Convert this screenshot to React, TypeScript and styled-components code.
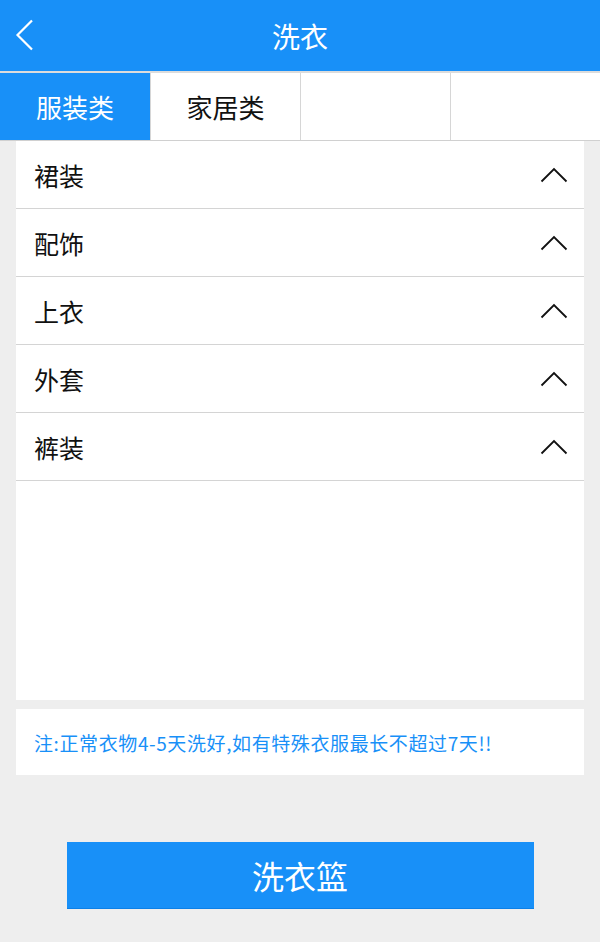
import React from "react";
import styled, { createGlobalStyle } from "styled-components";

const BLUE = "#1890f8";

const GlobalStyle = createGlobalStyle`
  html, body {
    margin: 0;
    padding: 0;
    background: #eeeeee;
    font-family: "Noto Sans CJK SC", "Noto Sans", sans-serif;
  }
`;

const Page = styled.div`
  width: 600px;
  height: 942px;
  display: flex;
  flex-direction: column;
  background: #eeeeee;
`;

const Header = styled.div`
  height: 71px;
  background: ${BLUE};
  display: flex;
  align-items: center;
  justify-content: center;
  position: relative;
  border-bottom: 2px solid #dcdcdc;
`;

const Title = styled.h1`
  margin: 0;
  color: #fff;
  font-size: 28px;
  font-weight: 400;
  line-height: 1;
`;

const Back = styled.div`
  position: absolute;
  left: 15px;
  top: 19px;
  width: 20px;
  height: 32px;
`;

const Tabs = styled.div`
  display: grid;
  grid-template-columns: repeat(4, 1fr);
  height: 67px;
  border-bottom: 1px solid #d0d0d0;
  background: #fff;
`;

const Tab = styled.div<{ $active?: boolean }>`
  display: flex;
  align-items: center;
  justify-content: center;
  font-size: 26px;
  color: ${(p) => (p.$active ? "#fff" : "#111")};
  background: ${(p) => (p.$active ? BLUE : "#fff")};
  border-left: 1px solid #d6d6d6;
  &:first-child {
    border-left: none;
  }
`;

const Panel = styled.div`
  margin: 0 16px;
  height: 559px;
  background: #fff;
  display: flex;
  flex-direction: column;
`;

const Row = styled.div`
  height: 67px;
  border-bottom: 1px solid #d4d4d4;
  display: flex;
  align-items: center;
  justify-content: space-between;
  padding: 0 16px 0 18px;
`;

const RowLabel = styled.span`
  font-size: 25px;
  color: #111;
`;

const Note = styled.div`
  margin: 9px 16px 0;
  height: 66px;
  background: #fff;
  display: flex;
  align-items: center;
  padding-left: 18px;
  color: ${BLUE};
  font-size: 19px;
  letter-spacing: 0.6px;
`;

const Footer = styled.div`
  flex: 1;
  display: flex;
  justify-content: center;
  padding-top: 67px;
`;

const Button = styled.button`
  width: 467px;
  height: 67px;
  background: ${BLUE};
  border: none;
  border-bottom: 1px solid #0c80e8;
  color: #fff;
  font-family: inherit;
  font-size: 32px;
  padding: 0;
  cursor: pointer;
`;

const Chevron = () => (
  <svg width="28" height="16" viewBox="0 0 28 16">
    <polyline points="1.5,14.5 14,2 26.5,14.5" fill="none" stroke="#111" strokeWidth="1.8" />
  </svg>
);

const categories = ["裙装", "配饰", "上衣", "外套", "裤装"];
const tabs = ["服装类", "家居类", "", ""];

export default function App() {
  return (
    <Page>
      <GlobalStyle />
      <Header>
        <Back>
          <svg width="20" height="32" viewBox="0 0 20 32">
            <polyline points="17,1.5 2.5,16 17,30.5" fill="none" stroke="#fff" strokeWidth="2.2" />
          </svg>
        </Back>
        <Title>洗衣</Title>
      </Header>
      <Tabs>
        {tabs.map((t, i) => (
          <Tab key={i} $active={i === 0}>
            {t}
          </Tab>
        ))}
      </Tabs>
      <Panel>
        {categories.map((c) => (
          <Row key={c}>
            <RowLabel>{c}</RowLabel>
            <Chevron />
          </Row>
        ))}
      </Panel>
      <Note>注:正常衣物4-5天洗好,如有特殊衣服最长不超过7天!!</Note>
      <Footer>
        <Button>洗衣篮</Button>
      </Footer>
    </Page>
  );
}
